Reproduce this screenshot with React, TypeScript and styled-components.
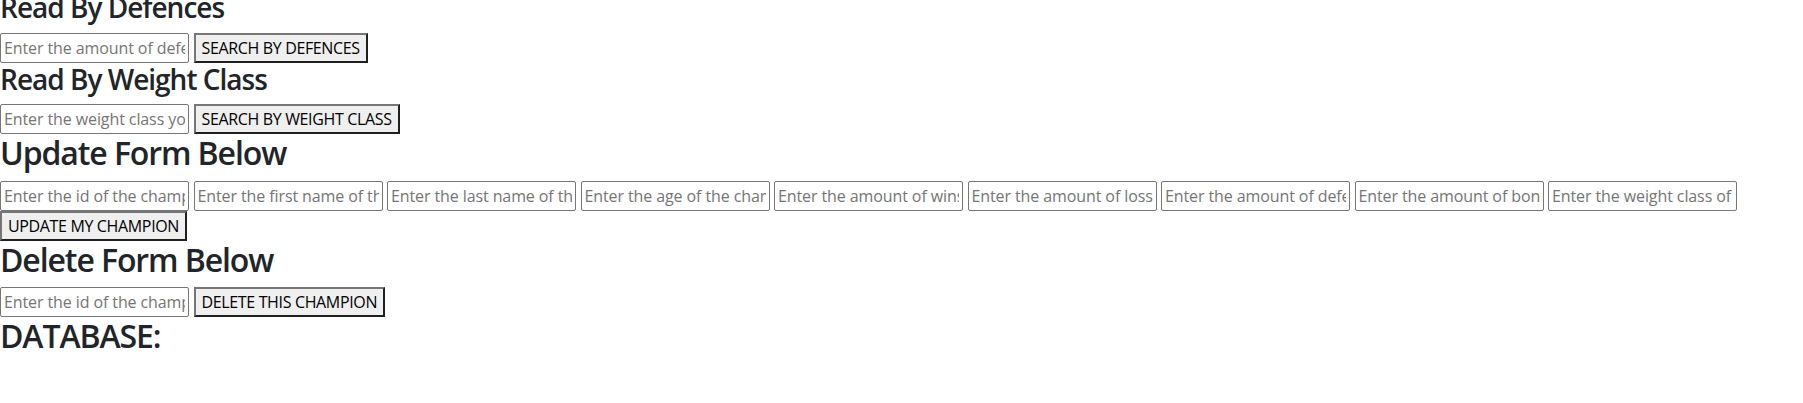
import React from "react";
import styled, { createGlobalStyle } from "styled-components";

const GlobalStyle = createGlobalStyle`
  *, *::before, *::after { box-sizing: border-box; }
  body {
    margin: 0;
    background: #ffffff;
    color: #212529;
    font-family: "Open Sans", "Noto Sans", "Liberation Sans", sans-serif;
    font-size: 16px;
    line-height: 1.5;
  }
`;

const Page = styled.main`
  display: flex;
  flex-direction: column;
  margin-top: -9px;
`;

const Title = styled.h3<{ $large?: boolean }>`
  margin: 0 0 8px;
  font-size: ${(p) => (p.$large ? "32px" : "28px")};
  font-weight: 600;
  line-height: 1.2;
  letter-spacing: ${(p) => (p.$large ? "-1.1px" : "-1px")};
  color: #212529;
`;

const FormRow = styled.form`
  display: flex;
  flex-wrap: wrap;
  align-items: center;
  column-gap: 4.5px;
  row-gap: 0;
`;

const TextInput = styled.input`
  width: 189px;
  height: 30px;
  margin: 0;
  padding: 2px 3px;
  border: 1px solid #767676;
  border-radius: 2px;
  background: #ffffff;
  font-family: inherit;
  font-size: 16px;
  line-height: 24px;
  letter-spacing: -0.1px;
  color: #212529;
  &::placeholder {
    color: #757575;
  }
`;

const ActionButton = styled.button`
  height: 30px;
  margin: 0;
  padding: 1px 6px;
  border-style: solid;
  border-width: 2px;
  border-color: #767676 #1f1f1f #1f1f1f #767676;
  border-radius: 0;
  background: #efefef;
  font-family: inherit;
  font-size: 16px;
  line-height: 24px;
  letter-spacing: -0.35px;
  color: #000000;
  text-transform: uppercase;
  cursor: pointer;
`;

const updateFields = [
  "Enter the id of the champion",
  "Enter the first name of the champion",
  "Enter the last name of the champion",
  "Enter the age of the champion",
  "Enter the amount of wins",
  "Enter the amount of losses",
  "Enter the amount of defences",
  "Enter the amount of bonuses",
  "Enter the weight class of the champion",
];

export default function App() {
  const stop = (e: React.FormEvent) => e.preventDefault();
  return (
    <>
      <GlobalStyle />
      <Page>
        <Title>Read By Defences</Title>
        <FormRow onSubmit={stop}>
          <TextInput placeholder="Enter the amount of defences" />
          <ActionButton type="submit">Search by defences</ActionButton>
        </FormRow>

        <Title>Read By Weight Class</Title>
        <FormRow onSubmit={stop}>
          <TextInput placeholder="Enter the weight class you want" />
          <ActionButton type="submit">Search by weight class</ActionButton>
        </FormRow>

        <Title as="h2" $large>
          Update Form Below
        </Title>
        <FormRow onSubmit={stop}>
          {updateFields.map((f) => (
            <TextInput key={f} placeholder={f} />
          ))}
          <ActionButton type="submit">Update my champion</ActionButton>
        </FormRow>

        <Title as="h2" $large>
          Delete Form Below
        </Title>
        <FormRow onSubmit={stop}>
          <TextInput placeholder="Enter the id of the champion" />
          <ActionButton type="submit">Delete this champion</ActionButton>
        </FormRow>

        <Title as="h2" $large>
          DATABASE:
        </Title>
      </Page>
    </>
  );
}
